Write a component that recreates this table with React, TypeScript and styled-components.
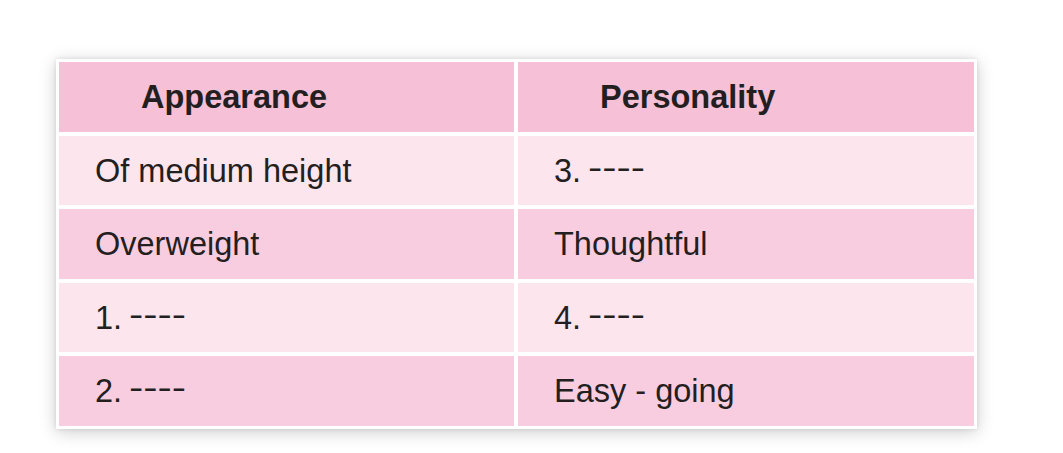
import * as React from 'react';
import styled, { createGlobalStyle } from 'styled-components';

const GlobalStyle = createGlobalStyle`
    html, body {
        margin: 0;
        padding: 0;
        background: #ffffff;
    }
    body {
        font-family: "Liberation Sans", Arial, sans-serif;
        color: #231f20;
    }
`;

const Page = styled.div`
    width: 1063px;
    height: 453px;
    padding: 59px 0 0 56px;
    box-sizing: border-box;
`;

const Table = styled.div`
    display: grid;
    grid-template-columns: 455px 456px;
    grid-auto-rows: 69.5px;
    gap: 4px;
    width: max-content;
    padding: 3px;
    background: #ffffff;
    box-shadow: 0 3px 16px rgba(0, 0, 0, 0.2), 0 0 4px rgba(0, 0, 0, 0.1);
`;

type Tone = 'head' | 'dark' | 'light';

const tones: Record<Tone, string> = {
    head: '#f6c0d6',
    dark: '#f9cde0',
    light: '#fde5ee',
};

const Cell = styled.div<{ $tone: Tone }>`
    display: flex;
    align-items: center;
    padding-top: 2px;
    background: ${p => tones[p.$tone]};
    padding-left: ${p => (p.$tone === 'head' ? '82px' : '36px')};
    font-size: 32.5px;
    font-weight: ${p => (p.$tone === 'head' ? 700 : 400)};
    white-space: nowrap;
`;

// blank to fill in: four long dashes sitting at the digit's middle
const Blank = styled.span`
    display: inline-block;
    margin-left: 7px;
    transform: scaleX(1.32) translateY(-3px);
    transform-origin: left center;
`;

type Row = { tone: Tone; left: React.ReactNode; right: React.ReactNode };

const blank = (n: number) => (
    <>
        {n}.<Blank>----</Blank>
    </>
);

const rows: Row[] = [
    { tone: 'head', left: 'Appearance', right: 'Personality' },
    { tone: 'light', left: 'Of medium height', right: blank(3) },
    { tone: 'dark', left: 'Overweight', right: 'Thoughtful' },
    { tone: 'light', left: blank(1), right: blank(4) },
    { tone: 'dark', left: blank(2), right: 'Easy - going' },
];

const App: React.FunctionComponent = () => (
    <>
        <GlobalStyle />
        <Page>
            <Table>
                {rows.map((r, i) => (
                    <React.Fragment key={i}>
                        <Cell $tone={r.tone}>{r.left}</Cell>
                        <Cell $tone={r.tone}>{r.right}</Cell>
                    </React.Fragment>
                ))}
            </Table>
        </Page>
    </>
);

export default App;
